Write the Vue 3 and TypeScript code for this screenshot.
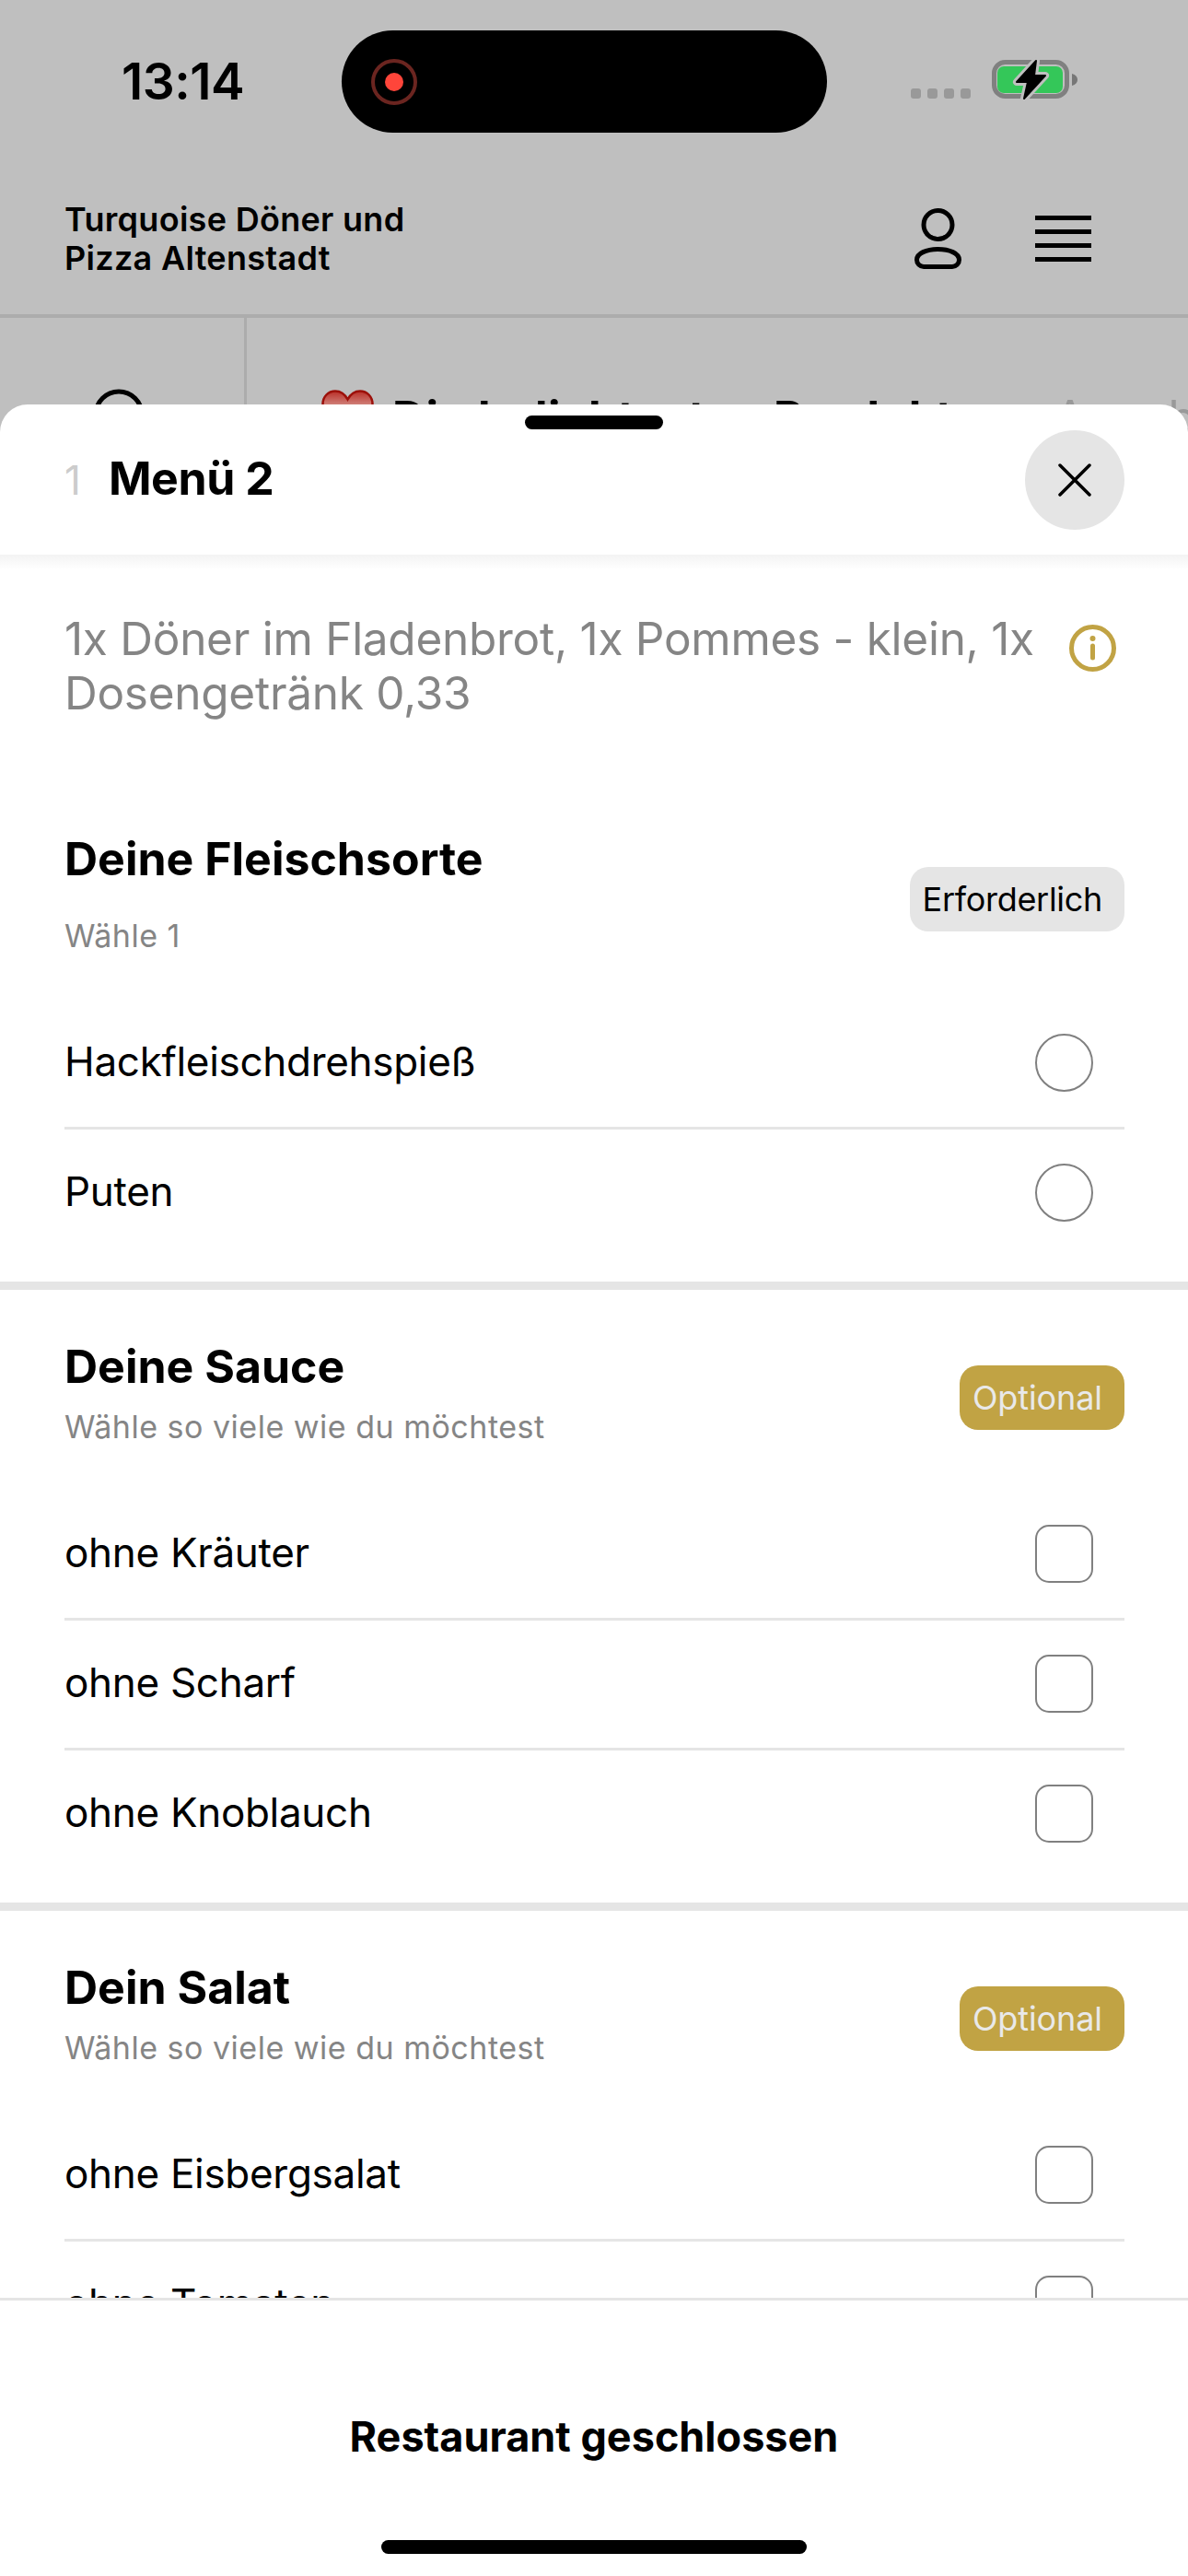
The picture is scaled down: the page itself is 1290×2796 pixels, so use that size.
<script setup lang="ts">
interface Section {
  title: string
  hint: string
  tag: string
  required: boolean
  options: string[]
}

const sections: Section[] = [
  {
    title: 'Deine Fleischsorte',
    hint: 'Wähle 1',
    tag: 'Erforderlich',
    required: true,
    options: ['Hackfleischdrehspieß', 'Puten'],
  },
  {
    title: 'Deine Sauce',
    hint: 'Wähle so viele wie du möchtest',
    tag: 'Optional',
    required: false,
    options: ['ohne Kräuter', 'ohne Scharf', 'ohne Knoblauch'],
  },
  {
    title: 'Dein Salat',
    hint: 'Wähle so viele wie du möchtest',
    tag: 'Optional',
    required: false,
    options: ['ohne Eisbergsalat', 'ohne Tomaten'],
  },
]
</script>

<template>
  <div class="screen">
    <div class="status">
      <span class="time">13:14</span>
      <svg class="status-icons" width="187" height="52" viewBox="0 0 187 52">
        <rect x="4" y="36" width="11" height="11" rx="3" fill="#999" />
        <rect x="22" y="36" width="11" height="11" rx="3" fill="#999" />
        <rect x="40" y="36" width="11" height="11" rx="3" fill="#999" />
        <rect x="58" y="36" width="11" height="11" rx="3" fill="#999" />
        <rect x="94.500" y="7.500" width="79" height="37" rx="12" fill="none" stroke="#808080" stroke-width="5" />
        <rect x="98" y="12" width="71" height="29" rx="7" fill="#34c759" />
        <path d="M179 20c4 1 6 3.500 6 6.500s-2 5.500-6 6.500z" fill="#777" />
        <path d="M140 6 119 29h12l-4 18 23-25h-12z" fill="#bfbfbf" stroke="#bfbfbf" stroke-width="8" stroke-linejoin="round" />
        <path d="M140 6 119 29h12l-4 18 23-25h-12z" fill="#000" stroke="#000" stroke-width="2" stroke-linejoin="round" />
      </svg>
    </div>

    <div class="island">
      <svg width="50" height="50" viewBox="0 0 50 50">
        <circle cx="25" cy="25" r="23" fill="none" stroke="#6b2520" stroke-width="4" />
        <circle cx="25" cy="25" r="10" fill="#ff453a" />
      </svg>
    </div>

    <header class="top">
      <div class="shop">Turquoise Döner und<br />Pizza Altenstadt</div>
      <div class="top-actions">
        <svg width="51" height="66" viewBox="0 0 51 66" fill="none" stroke="#000" stroke-width="5">
          <circle cx="25.500" cy="18" r="15.500" />
          <path d="M10 63.500h31a7.500 7.500 0 0 0 7.500-7.500c0-7-10.500-11.500-23-11.500S2.500 49 2.500 56a7.500 7.500 0 0 0 7.500 7.500z" />
        </svg>
        <div class="burger"><i></i><i></i><i></i><i></i></div>
      </div>
    </header>

    <div class="tabs">
      <div class="tab-search">
        <svg width="70" height="70" viewBox="0 0 70 70" fill="none" stroke="#000" stroke-width="5">
          <circle cx="29" cy="29" r="25" />
          <path d="m47 47 18 18" />
        </svg>
      </div>
      <div class="tab-list">
        <svg class="heart" width="57" height="52" viewBox="0 0 57 52">
          <defs>
            <linearGradient id="heartFill" x1="0" y1="0" x2="0" y2="1">
              <stop offset="0" stop-color="#b92e27" />
              <stop offset="0.300" stop-color="#cf7f78" />
              <stop offset="0.360" stop-color="#c93a32" />
              <stop offset="1" stop-color="#a81710" />
            </linearGradient>
          </defs>
          <path d="M28.500 50C12 38 1.500 29 1.500 15.500 1.500 7.500 7.500 1.500 15 1.500c6 0 10.500 3.500 13.500 9 3-5.500 7.500-9 13.500-9 7.500 0 13.500 6 13.500 14 0 13.500-10.500 22.500-27 34.500z" fill="url(#heartFill)" stroke="#9c100a" stroke-width="2.500" />
        </svg>
        <span class="tab-active">Die beliebtesten Produkte</span>
        <span class="tab-idle">Angebote</span>
      </div>
    </div>

    <section class="sheet">
      <div class="grabber"></div>
      <div class="sheet-head">
        <div class="sheet-title">
          <span class="qty">1</span>
          <span class="name">Menü 2</span>
        </div>
        <button class="close" type="button" aria-label="Schließen">
          <svg width="36" height="36" viewBox="0 0 36 36" fill="none" stroke="#000" stroke-width="3.500" stroke-linecap="round">
            <path d="m2 2 32 32M34 2 2 34" />
          </svg>
        </button>
      </div>
      <div class="head-fade"></div>

      <div class="sheet-body">
        <div class="desc">
          <p>1x Döner im Fladenbrot, 1x Pommes - klein, 1x Dosengetränk 0,33</p>
          <svg class="info" width="51" height="51" viewBox="0 0 51 51" fill="none" stroke="#c1a344">
            <circle cx="25.500" cy="25.500" r="23" stroke-width="5" />
            <circle cx="25.500" cy="15" r="3" fill="#c1a344" stroke="none" />
            <path d="M25.500 23v13" stroke-width="5" stroke-linecap="round" />
          </svg>
        </div>

        <div
          v-for="(section, i) in sections"
          :key="section.title"
          class="group"
          :class="{ 'group-first': i === 0 }"
        >
          <div class="group-head">
            <div>
              <h2>{{ section.title }}</h2>
              <p class="hint">{{ section.hint }}</p>
            </div>
            <span class="tag" :class="{ 'tag-required': section.required }">{{ section.tag }}</span>
          </div>
          <div v-for="option in section.options" :key="option" class="option">
            <span class="option-label">{{ option }}</span>
            <span class="control" :class="{ 'control-radio': section.required }"></span>
          </div>
        </div>
      </div>

      <footer class="sheet-foot">
        <div class="closed">Restaurant geschlossen</div>
        <div class="home-bar"></div>
      </footer>
    </section>
  </div>
</template>

<style>
html,
body {
  margin: 0;
  background: #fff;
}
</style>

<style scoped>
.screen {
  position: relative;
  width: 1290px;
  height: 2796px;
  overflow: hidden;
  background: #bfbfbf;
  color: #000;
  font-family: Inter, 'Noto Sans', sans-serif;
}

.status {
  display: flex;
  justify-content: space-between;
  height: 177px;
  padding: 0 118px 0 132px;
}

.time {
  font-size: 55px;
  font-weight: 600;
  line-height: 176px;
  letter-spacing: -0.5px;
}

.status-icons {
  margin-top: 60px;
}

.island {
  position: absolute;
  top: 33px;
  left: 371px;
  display: flex;
  align-items: center;
  width: 527px;
  height: 111px;
  padding-left: 32px;
  box-sizing: border-box;
  border-radius: 56px;
  background: #000;
}

.top {
  display: flex;
  align-items: center;
  justify-content: space-between;
  height: 164px;
  padding: 0 105px 0 70px;
  border-bottom: 4px solid #acacac;
}

.shop {
  font-size: 36px;
  font-weight: 600;
  line-height: 42px;
  letter-spacing: 0.3px;
}

.top-actions {
  display: flex;
  align-items: center;
  gap: 80px;
}

.burger {
  display: flex;
  flex-direction: column;
  gap: 10.300px;
  width: 61px;
}

.burger i {
  display: block;
  height: 5px;
  background: #000;
}

.tabs {
  display: flex;
  height: 200px;
}

.tab-search {
  flex: none;
  width: 268px;
  padding: 76px 0 0 100px;
  box-sizing: border-box;
  border-right: 3px solid #acacac;
}

.tab-list {
  display: flex;
  gap: 20px;
  padding: 78px 0 0 81px;
  white-space: nowrap;
  font-size: 50px;
  line-height: 60px;
}

.tab-active {
  font-weight: 700;
  letter-spacing: 0.4px;
}

.tab-idle {
  margin-left: 60px;
  color: #999;
}

.sheet {
  position: absolute;
  top: 439px;
  right: 0;
  bottom: 0;
  left: 0;
  display: flex;
  flex-direction: column;
  overflow: hidden;
  border-radius: 30px 30px 0 0;
  background: #fff;
}

.grabber {
  position: absolute;
  top: 12px;
  left: 570px;
  width: 150px;
  height: 15px;
  border-radius: 8px;
  background: #000;
}

.sheet-head {
  display: flex;
  flex: none;
  align-items: center;
  justify-content: space-between;
  height: 163px;
  padding: 0 69px 0 70px;
}

.sheet-title {
  display: flex;
  align-items: baseline;
  gap: 30px;
  padding-bottom: 3px;
}

.qty {
  color: #ccc;
  font-size: 44px;
}

.name {
  font-size: 50px;
  font-weight: 700;
  letter-spacing: -0.4px;
}

.close {
  display: flex;
  align-items: center;
  justify-content: center;
  width: 108px;
  height: 108px;
  padding: 0;
  border: 0;
  border-radius: 50%;
  background: #e5e5e5;
}

.head-fade {
  flex: none;
  height: 16px;
  margin-bottom: -16px;
  background: linear-gradient(#f3f3f3, #fff);
}

.sheet-body {
  flex: 1;
  min-height: 0;
  overflow: hidden;
}

.desc {
  display: flex;
  align-items: flex-start;
  justify-content: space-between;
  padding: 62px 78px 0 70px;
  color: #858585;
  font-size: 49.500px;
  line-height: 59px;
  letter-spacing: -0.27px;
}

.desc p {
  width: 1070px;
  margin: 0;
}

.info {
  flex: none;
  margin-top: 14px;
}

.group {
  padding: 53px 69px 27.500px 70px;
  border-bottom: 9px solid #e5e5e5;
}

.group:last-child {
  border-bottom: 0;
}

.group-first {
  padding-top: 120px;
}

.group-head {
  display: flex;
  align-items: flex-start;
  justify-content: space-between;
  padding-bottom: 47.500px;
}

.group-head h2 {
  margin: 0;
  font-size: 50px;
  font-weight: 700;
  line-height: 60px;
}

.hint {
  margin: 15px 0 0;
  color: #858585;
  font-size: 34px;
  line-height: 42px;
  letter-spacing: 0.5px;
}

.group-first .hint {
  margin-top: 33px;
}

.tag {
  margin-top: 29px;
  padding: 0 24px 0 14px;
  border-radius: 20px;
  background: #c1a344;
  color: #e9e9e9;
  font-size: 36px;
  line-height: 70px;
  letter-spacing: -0.1px;
}

.tag-required {
  margin-top: 39px;
  background: #e5e5e5;
  color: #000;
  letter-spacing: -0.3px;
}

.option {
  display: flex;
  align-items: center;
  justify-content: space-between;
  height: 138px;
  padding-right: 34px;
  border-bottom: 3px solid #e5e5e5;
  font-size: 44px;
  letter-spacing: -0.3px;
}

.option:last-child {
  border-bottom: 0;
}

.option-label {
  padding-bottom: 3px;
}

.control {
  width: 63px;
  height: 63px;
  box-sizing: border-box;
  border: 2px solid #808080;
  border-radius: 15px;
}

.control-radio {
  border-radius: 50%;
}

.sheet-foot {
  flex: none;
  padding-top: 123px;
  border-top: 3px solid #e5e5e5;
  background: #fff;
}

.closed {
  font-size: 45px;
  font-weight: 700;
  line-height: 50px;
  text-align: center;
}

.home-bar {
  width: 462px;
  height: 15px;
  margin: 87px auto 24px;
  border-radius: 8px;
  background: #000;
}
</style>
